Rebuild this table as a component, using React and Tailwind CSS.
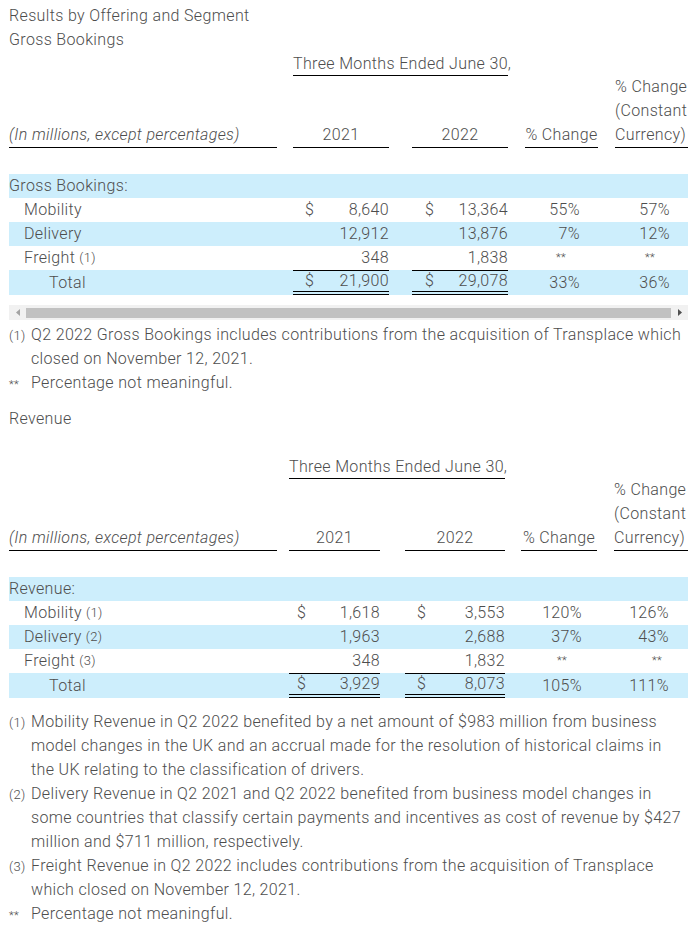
import React from "react";

const BLUE = "bg-[#cdeefc]";

// column classes: label, gap, 2021, gap, 2022, gap, % change, gap, constant currency
const T1 = {
  w: ["w-[268px]", "w-[16px]", "w-[96px]", "w-[23px]", "w-[96px]", "w-[17px]", "w-[73px]", "w-[17px]", "w-[73px]"],
  lead: "w-[284px]",
  mid: "w-[215px]",
  d1: "pl-[12px]",
  d2: "pl-[13px]",
  pctPad: "pr-[18px]",
  ccyPad: "pr-[18px]",
  starPct: "pr-[32px]",
  starCcy: "pr-[33px]",
};

const T2 = {
  w: ["w-[268px]", "w-[12px]", "w-[91px]", "w-[25px]", "w-[100px]", "w-[16px]", "w-[76px]", "w-[17px]", "w-[74px]"],
  lead: "w-[280px]",
  mid: "w-[216px]",
  d1: "pl-[8px]",
  d2: "pl-[12px]",
  pctPad: "pr-[15px]",
  ccyPad: "pr-[19px]",
  starPct: "pr-[30px]",
  starCcy: "pr-[26px]",
};

function Money({ w, pad, sign, value, total }) {
  return (
    <div
      className={`flex h-full items-center justify-between ${w} ${pad} ${
        total ? "border-t border-b-[4px] border-double border-t-black border-b-black" : ""
      }`}
    >
      <span>{sign ? "$" : ""}</span>
      <span>{value}</span>
    </div>
  );
}

function Pct({ w, pad, starPad, value }) {
  const star = value === "**";
  return (
    <div className={`flex h-full items-center justify-end ${w} ${star ? starPad : pad}`}>
      {star ? <span className="text-[11px]">**</span> : value}
    </div>
  );
}

function Table({ t, heading, rows }) {
  const c = t.w;
  return (
    <div className="w-[679px]">
      <div className="flex h-6">
        <div className={t.lead} />
        <div className={`${t.mid} border-b border-black leading-[23px] whitespace-nowrap`}>
          Three Months Ended June 30,
        </div>
      </div>
      <div className="flex h-[72px] items-end">
        <div className={`${c[0]} border-b border-black italic leading-6 whitespace-nowrap`}>
          (In millions, except percentages)
        </div>
        <div className={c[1]} />
        <div className={`${c[2]} border-b border-black text-center leading-6`}>2021</div>
        <div className={c[3]} />
        <div className={`${c[4]} border-b border-black text-center leading-6`}>2022</div>
        <div className={c[5]} />
        <div className={`${c[6]} border-b border-black text-center leading-6 whitespace-nowrap`}>% Change</div>
        <div className={c[7]} />
        <div className={`${c[8]} border-b border-black leading-6 whitespace-nowrap`}>
          % Change
          <br />
          (Constant
          <br />
          Currency)
        </div>
      </div>
      <div className="h-[26px]" />
      <div className={`h-6 leading-6 ${BLUE}`}>{heading}</div>
      {rows.map((r, i) => (
        <div key={i} className={`flex ${r.total ? "h-[25px]" : "h-6"} ${i % 2 === 1 || r.total ? BLUE : ""}`}>
          <div className={`flex items-center whitespace-nowrap ${c[0]} ${r.total ? "pl-[40px]" : "pl-[15px]"}`}>
            {r.label}
            {r.note && <span className="ml-[4px] text-[13px]">({r.note})</span>}
          </div>
          <div className={c[1]} />
          <Money w={c[2]} pad={t.d1} sign={r.sign} value={r.a} total={r.total} />
          <div className={c[3]} />
          <Money w={c[4]} pad={t.d2} sign={r.sign} value={r.b} total={r.total} />
          <div className={c[5]} />
          <Pct w={c[6]} pad={t.pctPad} starPad={t.starPct} value={r.p} />
          <div className={c[7]} />
          <Pct w={c[8]} pad={t.ccyPad} starPad={t.starCcy} value={r.q} />
        </div>
      ))}
    </div>
  );
}

function Foot({ mark, children }) {
  const star = mark === "**";
  return (
    <div className="flex">
      <div className="w-[22px] shrink-0">
        {star ? <span className="text-[11px]">**</span> : <span className="text-[13px]">({mark})</span>}
      </div>
      <div>{children}</div>
    </div>
  );
}

const gross = [
  { label: "Mobility", sign: true, a: "8,640", b: "13,364", p: "55%", q: "57%" },
  { label: "Delivery", a: "12,912", b: "13,876", p: "7%", q: "12%" },
  { label: "Freight", note: 1, a: "348", b: "1,838", p: "**", q: "**" },
  { label: "Total", total: true, sign: true, a: "21,900", b: "29,078", p: "33%", q: "36%" },
];

const revenue = [
  { label: "Mobility", note: 1, sign: true, a: "1,618", b: "3,553", p: "120%", q: "126%" },
  { label: "Delivery", note: 2, a: "1,963", b: "2,688", p: "37%", q: "43%" },
  { label: "Freight", note: 3, a: "348", b: "1,832", p: "**", q: "**" },
  { label: "Total", total: true, sign: true, a: "3,929", b: "8,073", p: "105%", q: "111%" },
];

export default function App() {
  return (
    <div className="min-h-[926px] bg-white px-[9px] pt-[4px] text-[16px] leading-6 tracking-[0.35px] text-[#4d4d4d] font-['Roboto','Liberation_Sans',sans-serif] font-light">
      <div>Results by Offering and Segment</div>
      <div>Gross Bookings</div>
      <Table t={T1} heading="Gross Bookings:" rows={gross} />

      <div className="mt-[10px] flex h-[15px] w-[679px] items-center bg-[#f1f1f1]">
        <div className="flex w-[17px] justify-center">
          <svg width="4" height="7" viewBox="0 0 4 7">
            <path d="M4 0 L0 3.5 L4 7 Z" fill="#a3a3a3" />
          </svg>
        </div>
        <div className="h-[10px] flex-1 bg-[#c1c1c1]" />
        <div className="flex w-[17px] justify-center">
          <svg width="4" height="7" viewBox="0 0 4 7">
            <path d="M0 0 L4 3.5 L0 7 Z" fill="#505050" />
          </svg>
        </div>
      </div>

      <div className="mt-[3px] w-[679px]">
        <Foot mark="1">
          Q2 2022 Gross Bookings includes contributions from the acquisition of Transplace which closed on November 12,
          2021.
        </Foot>
        <Foot mark="**">Percentage not meaningful.</Foot>
      </div>

      <div className="mt-[10px]">Revenue</div>
      <div className="h-6" />
      <Table t={T2} heading="Revenue:" rows={revenue} />

      <div className="mt-[12px] w-[679px]">
        <Foot mark="1">
          Mobility Revenue in Q2 2022 benefited by a net amount of $983 million from business model changes in the UK
          and an accrual made for the resolution of historical claims in the UK relating to the classification of
          drivers.
        </Foot>
        <Foot mark="2">
          Delivery Revenue in Q2 2021 and Q2 2022 benefited from business model changes in some countries that classify
          certain payments and incentives as cost of revenue by $427 million and $711 million, respectively.
        </Foot>
        <Foot mark="3">
          Freight Revenue in Q2 2022 includes contributions from the acquisition of Transplace which closed on November
          12, 2021.
        </Foot>
        <Foot mark="**">Percentage not meaningful.</Foot>
      </div>
    </div>
  );
}
